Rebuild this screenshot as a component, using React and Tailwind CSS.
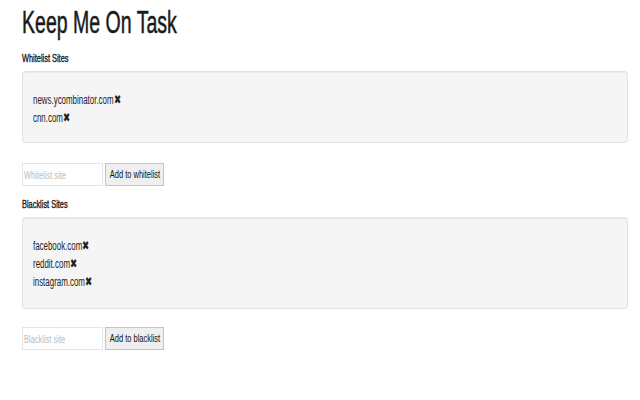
const whitelist = ['news.ycombinator.com', 'cnn.com']
const blacklist = ['facebook.com', 'reddit.com', 'instagram.com']

// the page's font is a condensed sans; squeeze Liberation Sans to match
const heading = 'inline-block origin-left scale-x-[0.74] whitespace-nowrap'

function SiteList({ sites, height }) {
  return (
    <div className={`mt-[6px] ${height} rounded-[3px] border border-[#e3e3e3] bg-[#f5f5f5] px-[10px] pt-[19px] shadow-[inset_0_1px_1px_rgba(0,0,0,0.05)]`}>
      <ul className="flex flex-col">
        {sites.map((s) => (
          <li key={s} className="h-[18px] text-[12px] leading-[18px] text-[#222]">
            <span className="inline-block origin-left scale-x-[0.66] whitespace-nowrap">
              {s}
              <span className="text-[13px]">✖</span>
            </span>
          </li>
        ))}
      </ul>
    </div>
  )
}

function AddRow({ placeholder, label, gap }) {
  return (
    <div className={`${gap} flex items-center gap-[2px]`}>
      <div className="relative h-[23px] w-[81px] overflow-hidden border border-[#e5e5e5] bg-white">
        <span className="absolute top-[5px] left-[1px] inline-block origin-left scale-x-[0.68] whitespace-nowrap text-[11px] leading-[12px] text-[#bbb]">
          {placeholder}
        </span>
      </div>
      <button className="flex h-[23px] w-[59px] items-center justify-center overflow-hidden border border-[#c4c4c4] bg-[#efefef] text-[11px] text-[#111]">
        <span className="inline-block scale-x-[0.68] whitespace-nowrap">{label}</span>
      </button>
    </div>
  )
}

export default function App() {
  return (
    <div className="min-h-[400px] bg-white pt-[5px] pr-[12px] pl-[22px] font-['Liberation_Sans',Arial,sans-serif] text-[#111]">
      <h1 className="text-[31px] leading-[35px] text-[#1a1a1a] [-webkit-text-stroke:0.5px_#1a1a1a]">
        <span className="inline-block origin-left scale-x-[0.63] whitespace-nowrap">Keep Me On Task</span>
      </h1>
      <h3 className="mt-[13px] text-[10px] leading-[12px] text-[#1a1a1a] [-webkit-text-stroke:0.35px_#1a1a1a]">
        <span className={heading}>Whitelist Sites</span>
      </h3>
      <SiteList sites={whitelist} height="h-[72px]" />
      <AddRow placeholder="Whitelist site" label="Add to whitelist" gap="mt-[20px]" />
      <h3 className="mt-[13px] text-[10px] leading-[12px] text-[#1a1a1a] [-webkit-text-stroke:0.35px_#1a1a1a]">
        <span className={heading}>Blacklist Sites</span>
      </h3>
      <SiteList sites={blacklist} height="h-[92px]" />
      <AddRow placeholder="Blacklist site" label="Add to blacklist" gap="mt-[18px]" />
    </div>
  )
}
